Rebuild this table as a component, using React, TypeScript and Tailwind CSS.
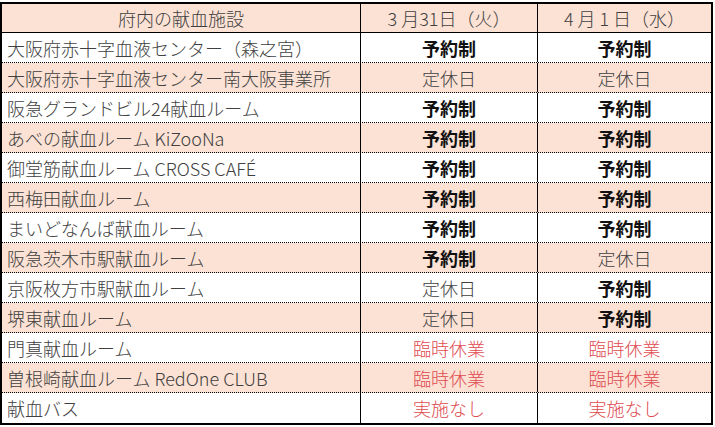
const FONT = {
  fontFamily: '"Noto Sans CJK JP", "Noto Sans", sans-serif',
};

type Status = "予約制" | "定休日" | "臨時休業" | "実施なし";

const rows: { name: string; d1: Status; d2: Status }[] = [
  { name: "大阪府赤十字血液センター（森之宮）", d1: "予約制", d2: "予約制" },
  { name: "大阪府赤十字血液センター南大阪事業所", d1: "定休日", d2: "定休日" },
  { name: "阪急グランドビル24献血ルーム", d1: "予約制", d2: "予約制" },
  { name: "あべの献血ルーム KiZooNa", d1: "予約制", d2: "予約制" },
  { name: "御堂筋献血ルーム CROSS CAFÉ", d1: "予約制", d2: "予約制" },
  { name: "西梅田献血ルーム", d1: "予約制", d2: "予約制" },
  { name: "まいどなんば献血ルーム", d1: "予約制", d2: "予約制" },
  { name: "阪急茨木市駅献血ルーム", d1: "予約制", d2: "定休日" },
  { name: "京阪枚方市駅献血ルーム", d1: "定休日", d2: "予約制" },
  { name: "堺東献血ルーム", d1: "定休日", d2: "予約制" },
  { name: "門真献血ルーム", d1: "臨時休業", d2: "臨時休業" },
  { name: "曽根崎献血ルーム RedOne CLUB", d1: "臨時休業", d2: "臨時休業" },
  { name: "献血バス", d1: "実施なし", d2: "実施なし" },
];

function StatusCell({ value, last }: { value: Status; last?: boolean }) {
  const tone =
    value === "予約制"
      ? "font-bold text-[#111]"
      : value === "定休日"
        ? "font-light text-[#404040]"
        : "font-light text-[#e04a4f]";
  return (
    <div
      className={`flex items-center justify-center ${tone} ${
        last ? "flex-1" : "w-[177px] border-r border-black"
      }`}
    >
      {value}
    </div>
  );
}

export default function App() {
  return (
    <div className="w-[715px] h-[427px] bg-white pt-[2px]" style={FONT}>
      <div className="w-[713px] border-2 border-black text-[18px] leading-none text-[#404040] font-light">
        {/* Header */}
        <div className="flex h-[29px] bg-[#fbe2d5] border-b border-black">
          <div className="w-[359px] border-r border-black flex items-center justify-center">
            府内の献血施設
          </div>
          <div className="w-[177px] border-r border-black flex items-center justify-center">
            3&nbsp;月31日（火）
          </div>
          <div className="flex-1 flex items-center justify-center">
            4&nbsp;月&nbsp;1&nbsp;日（水）
          </div>
        </div>

        {/* Rows */}
        {rows.map((r, i) => {
          const last = i === rows.length - 1;
          return (
            <div
              key={r.name}
              className={`flex h-[30px] ${i % 2 === 1 ? "bg-[#fbe2d5]" : "bg-white"} ${
                last ? "" : "border-b border-dotted border-black"
              }`}
            >
              <div className="w-[359px] border-r border-black flex items-center pl-[5px] whitespace-nowrap">
                {r.name}
              </div>
              <StatusCell value={r.d1} />
              <StatusCell value={r.d2} last />
            </div>
          );
        })}
      </div>
    </div>
  );
}
